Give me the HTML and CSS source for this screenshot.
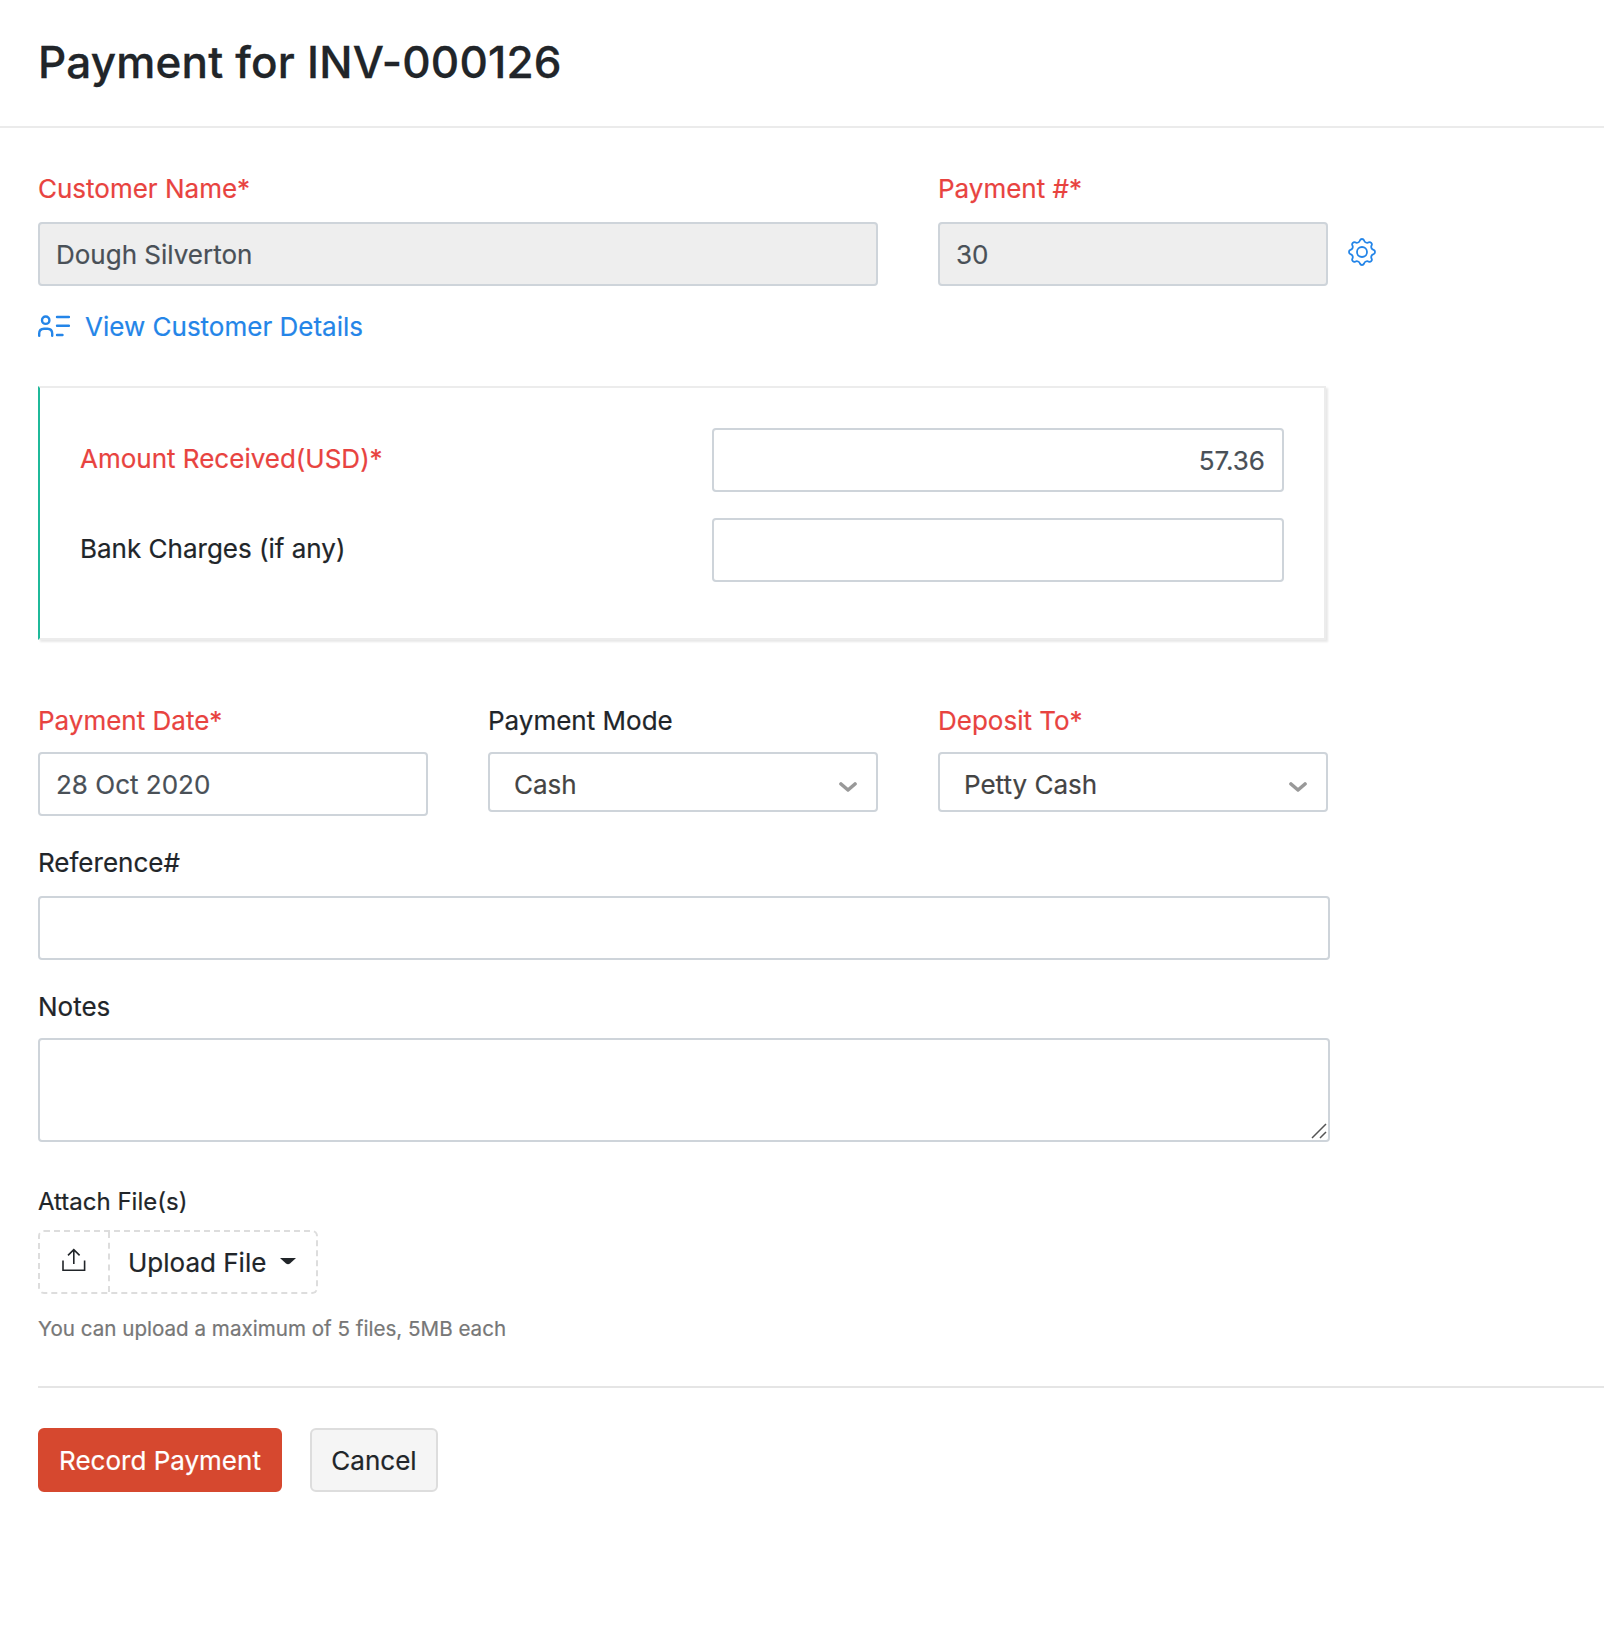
FILE: index.html
```html
<!DOCTYPE html>
<html lang="en">
<head>
<meta charset="utf-8">
<title>Payment for INV-000126</title>
<link rel="stylesheet" href="styles.css">
</head>
<body>
<header class="page-header">
  <h1 class="page-title">Payment for INV-000126</h1>
</header>
<form class="payment-form">
  <div class="row row-customer">
    <div class="field field-wide">
      <label class="label required" for="customer">Customer Name*</label>
      <input class="input" id="customer" value="Dough Silverton" disabled>
    </div>
    <div class="field">
      <label class="label required" for="number">Payment #*</label>
      <input class="input" id="number" value="30" disabled>
    </div>
    <svg class="gear" viewBox="0 0 28 28" fill="none" stroke="#2485e8" stroke-width="1.8" stroke-linejoin="round">
      <circle cx="14" cy="14" r="5"/>
      <path d="M11.950 2.380A2.200 2.200 0 0 1 16.050 2.380A3.200 3.200 0 0 0 20.770 4.330A2.200 2.200 0 0 1 23.670 7.230A3.200 3.200 0 0 0 25.620 11.950A2.200 2.200 0 0 1 25.620 16.050A3.200 3.200 0 0 0 23.670 20.770A2.200 2.200 0 0 1 20.770 23.670A3.200 3.200 0 0 0 16.050 25.620A2.200 2.200 0 0 1 11.950 25.620A3.200 3.200 0 0 0 7.230 23.670A2.200 2.200 0 0 1 4.330 20.770A3.200 3.200 0 0 0 2.380 16.050A2.200 2.200 0 0 1 2.380 11.950A3.200 3.200 0 0 0 4.330 7.230A2.200 2.200 0 0 1 7.230 4.330A3.200 3.200 0 0 0 11.950 2.380Z"/>
    </svg>
  </div>
  <a class="details-link">
    <svg class="contact-icon" viewBox="0 0 32 24" fill="none" stroke="currentColor" stroke-width="2.400" stroke-linecap="round">
      <circle cx="7.700" cy="6.200" r="3.700"/>
      <path d="M1.200 21.800v-2.300q0-4.800 4.800-4.800h3.400q4.800 0 4.800 4.800v2.300M19 3h12M19 11.800h12M19 21h5.500"/>
    </svg>
    <span class="link-text">View Customer Details</span>
  </a>
  <section class="amount-card">
    <div class="amount-row">
      <label class="label required" for="amount">Amount Received(USD)*</label>
      <input class="input amount-input" id="amount" value="57.36">
    </div>
    <div class="amount-row">
      <label class="label" for="charges">Bank Charges (if any)</label>
      <input class="input amount-input" id="charges">
    </div>
  </section>
  <div class="row">
    <div class="field">
      <label class="label required" for="date">Payment Date*</label>
      <input class="input" id="date" value="28 Oct 2020">
    </div>
    <div class="field">
      <span class="label">Payment Mode</span>
      <div class="select"><span>Cash</span>
        <svg class="chevron" viewBox="0 0 18 12"><path d="M2 3l7 6 7-6"/></svg>
      </div>
    </div>
    <div class="field">
      <span class="label required">Deposit To*</span>
      <div class="select"><span>Petty Cash</span>
        <svg class="chevron" viewBox="0 0 18 12"><path d="M2 3l7 6 7-6"/></svg>
      </div>
    </div>
  </div>
  <div class="field field-full reference">
    <label class="label" for="reference">Reference#</label>
    <input class="input" id="reference">
  </div>
  <div class="field field-full notes">
    <label class="label" for="notes">Notes</label>
    <div class="notes-box">
      <textarea class="input textarea" id="notes"></textarea>
      <svg class="grip" viewBox="0 0 16 16"><path d="M1 15L15 1M9 15l6-6"/></svg>
    </div>
  </div>
  <div class="attach">
    <span class="attach-label">Attach File(s)</span>
    <div class="upload">
      <span class="upload-icon">
        <svg width="24" height="24" viewBox="0 0 24 24" fill="none" stroke="#212529" stroke-width="1.600"><path d="M1 12.500V22.200H22.600V12.500M11.800 16V1.600M6 7.400l5.800-5.800 5.800 5.800"/></svg>
      </span>
      <span class="upload-text">Upload File</span>
      <svg class="caret" viewBox="0 0 16 7"><path d="M0 0H16L10 5.400Q8 7 6 5.400Z"/></svg>
    </div>
    <span class="hint">You can upload a maximum of 5 files, 5MB each</span>
  </div>
  <footer class="actions">
    <button class="button primary" type="button">Record Payment</button>
    <button class="button" type="button">Cancel</button>
  </footer>
</form>
</body>
</html>
```
FILE: styles.css
```css
* { box-sizing: border-box; }
body {
  margin: 0;
  background: #fff;
  color: #212529;
  font: 400 26px/36px Inter, "Liberation Sans", sans-serif;
  -webkit-text-stroke: 0.2px;
}
.page-header {
  height: 128px;
  padding-left: 38px;
  border-bottom: 2px solid #ebebeb;
}
.page-title {
  margin: 0;
  font-size: 44px;
  font-weight: 500;
  line-height: 124px;
  letter-spacing: 0.2px;
  -webkit-text-stroke: 0.3px;
}
.payment-form {
  display: flex;
  flex-direction: column;
  padding: 42px 0 0 38px;
}
.row { display: flex; gap: 60px; }
.field {
  display: flex;
  flex-direction: column;
  gap: 14px;
  width: 390px;
}
.field-wide { width: 840px; }
.field-full { width: 1292px; }
.row-customer .field, .reference { gap: 16px; }
.label {
  display: block;
  height: 36px;
  line-height: 38px;
  white-space: nowrap;
}
.required { color: #e8433f; }
.input {
  display: block;
  width: 100%;
  height: 64px;
  margin: 0;
  padding: 0 16px;
  border: 2px solid #ced4da;
  border-radius: 4px;
  background: #fff;
  color: #495057;
  font: inherit;
  letter-spacing: inherit;
}
.input:disabled { background: #eee; }
.gear {
  width: 28px;
  height: 28px;
  margin: 68px 0 0 -40px;
}
.details-link {
  display: flex;
  align-items: center;
  gap: 15px;
  margin-top: 22px;
  color: #2485e8;
}
.contact-icon { width: 32px; height: 24px; }
.link-text { height: 36px; line-height: 38px; }
.amount-card {
  display: flex;
  flex-direction: column;
  gap: 26px;
  width: 1288px;
  height: 254px;
  margin-top: 42px;
  padding: 40px 40px 0;
  border: 2px solid #ececec;
  border-left-color: #1fb99a;
  box-shadow: 2px 2px 2px #e8e8e8;
}
.amount-row {
  display: flex;
  justify-content: space-between;
  align-items: center;
}
.amount-row .label { margin-bottom: 4px; }
.amount-input {
  width: 572px;
  padding-right: 17px;
  text-align: right;
}
.amount-card + .row { height: 114px; margin-top: 62px; }
.select {
  display: flex;
  justify-content: space-between;
  align-items: center;
  height: 60px;
  padding: 5px 19px 0 24px;
  border: 2px solid #ced4da;
  border-radius: 4px;
  color: #444;
}
.chevron {
  width: 18px;
  height: 12px;
  margin-top: 5px;
  fill: none;
  stroke: #999;
  stroke-width: 3.600;
  stroke-linecap: round;
  stroke-linejoin: round;
}
.reference { margin-top: 28px; }
.notes { margin-top: 28px; }
.notes-box { position: relative; }
.textarea { height: 104px; resize: none; }
.grip {
  position: absolute;
  right: 3px;
  bottom: 3px;
  width: 16px;
  height: 16px;
  fill: none;
  stroke: #555;
  stroke-width: 1.500;
}
.attach { margin-top: 42px; }
.attach-label {
  display: block;
  height: 34px;
  font-size: 24px;
  line-height: 36px;
}
.upload {
  display: flex;
  align-items: center;
  width: 280px;
  height: 64px;
  margin-top: 12px;
  border: 2px dashed #ddd;
  border-radius: 6px;
}
.upload-icon {
  display: flex;
  justify-content: center;
  align-items: center;
  width: 70px;
  height: 60px;
  padding-bottom: 4px;
  border-right: 2px dashed #ddd;
}
.upload-text { padding: 2px 0 0 18px; }
.caret {
  width: 16px;
  height: 7px;
  margin: -1px 0 0 14px;
  fill: #212529;
}
.hint {
  display: block;
  height: 28px;
  margin-top: 20px;
  color: #777;
  font-size: 20.6px;
  line-height: 30px;
}
.actions {
  display: flex;
  gap: 28px;
  margin-top: 44px;
  padding-top: 40px;
  border-top: 2px solid #e5e5e5;
}
.button {
  width: 128px;
  height: 64px;
  padding: 2px 0 0;
  border: 2px solid #ddd;
  border-radius: 6px;
  background: #f5f5f5;
  color: inherit;
  font: inherit;
  letter-spacing: inherit;
  white-space: nowrap;
}
.primary {
  width: 244px;
  border-color: #d6482f;
  background: #d6482f;
  color: #fff;
}
```
